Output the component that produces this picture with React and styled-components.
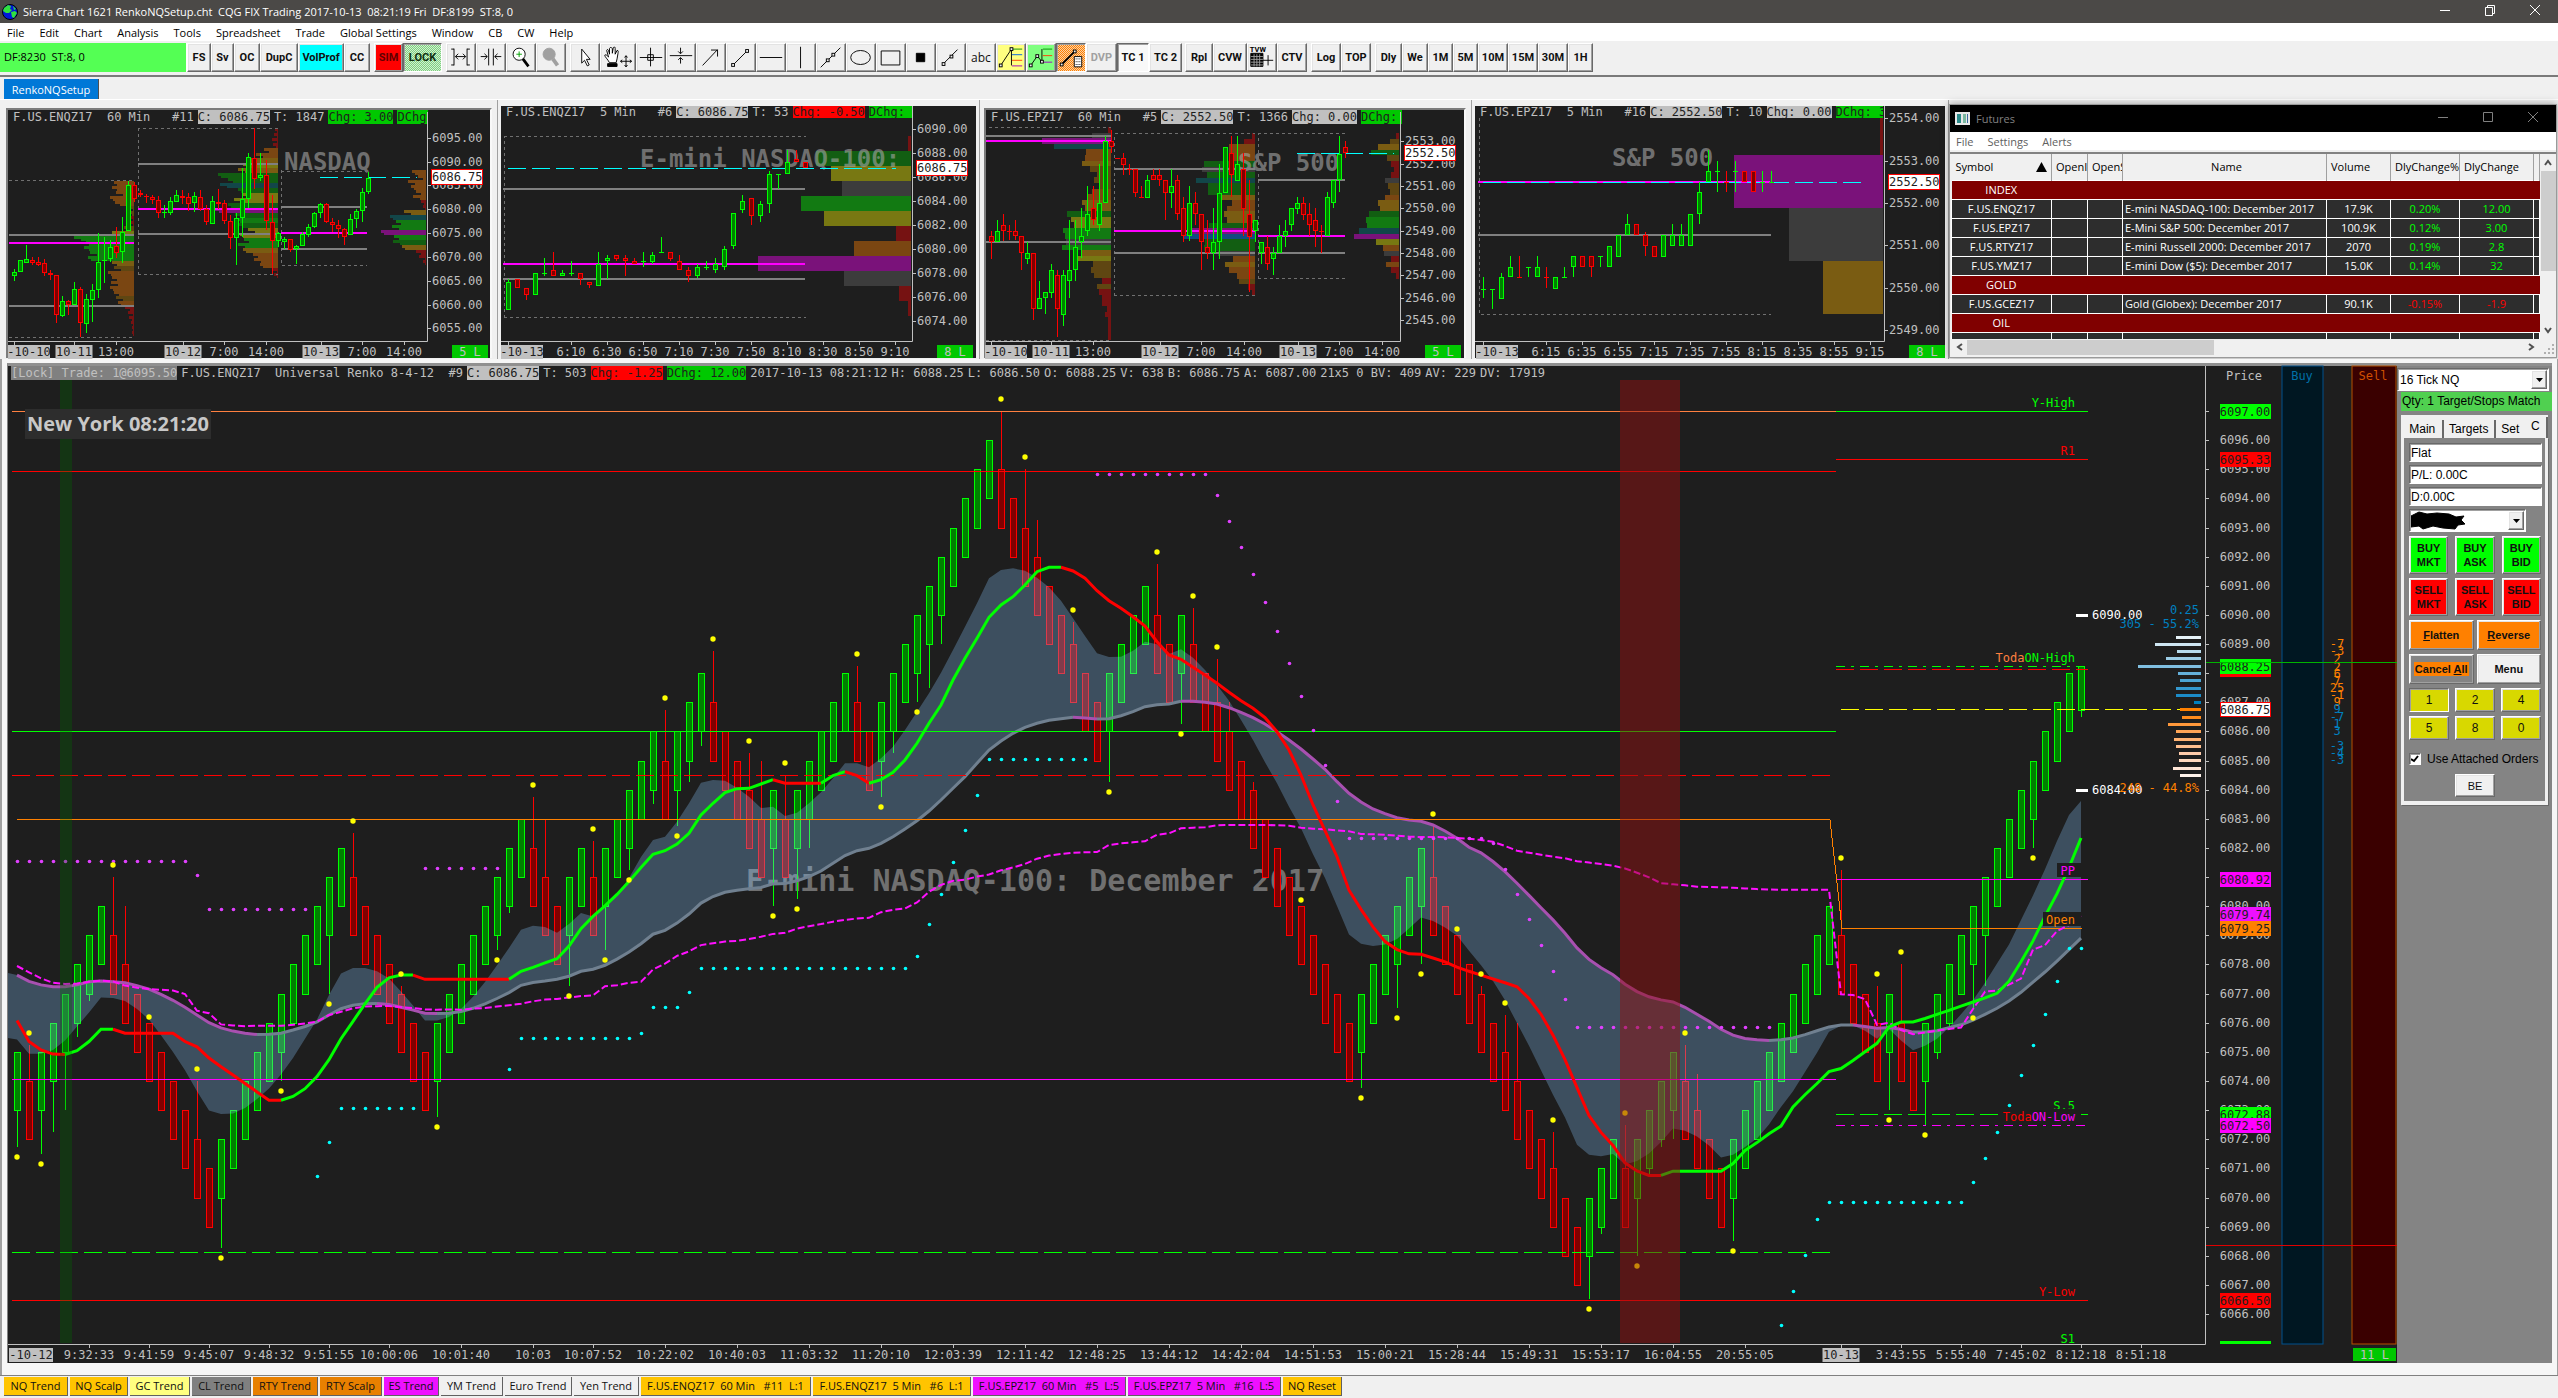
import React from "react"
import styled, { createGlobalStyle, css } from "styled-components"

const UI = `"Open Sans", "Noto Sans", sans-serif`
const MONO = `"DejaVu Sans Mono", "Liberation Mono", monospace`
const SANS = `"Liberation Sans", Arial, sans-serif`

const GlobalStyle = createGlobalStyle`
  * {
    box-sizing: border-box;
  }

  body {
    margin: 0;
    background: #f0f0f0;
    font-family: ${UI};
    font-size: 12px;
  }

  button, input, select {
    font: inherit;
    margin: 0;
    padding: 0;
    border-radius: 0;
  }
`

const raised = css`
  border: 1px solid;
  border-color: #ffffff #696969 #696969 #ffffff;
  box-shadow: inset -1px -1px 0 #a0a0a0, inset 1px 1px 0 #e3e3e3;
`

const sunken = css`
  border: 1px solid;
  border-color: #696969 #ffffff #ffffff #696969;
  box-shadow: inset 1px 1px 0 #a0a0a0;
`

/* ---------- frame ---------- */

const Shell = styled.div`
  display: flex;
  flex-direction: column;
  height: 100vh;
  overflow: hidden;
`

const TitleBar = styled.header`
  display: flex;
  align-items: center;
  flex: 0 0 23px;
  padding-left: 2px;
  background: #4b4947;
  color: #ffffff;
  white-space: pre;
`

const TitleText = styled.span`
  flex: 1;
  padding-left: 5px;
  font-size: 11px;
`

const WindowButtons = styled.div`
  display: flex;
`

const WindowButton = styled.button`
  width: 45px;
  height: 22px;
  border: 0;
  background: none;
  color: inherit;
`

const MenuBar = styled.nav`
  display: flex;
  flex: 0 0 18px;
  align-items: center;
  gap: 15px;
  padding-left: 7px;
  background: #ffffff;
  font-size: 11px;
`

const MenuLink = styled.a`
  color: ${props => props.$color || "#000000"};
  text-decoration: none;
`

const Toolbar = styled.div`
  display: flex;
  flex: 0 0 36px;
  padding-top: 2px;
  background: #f0f0f0;
  border-bottom: 2px solid #7a7a7a;
`

const FeedStatus = styled.div`
  width: 187px;
  height: 29px;
  padding-left: 4px;
  border-right: 1px solid #ffffff;
  background: #54ff54;
  font-size: 11px;
  line-height: 28px;
  white-space: pre;
`

const ToolButton = styled.button`
  display: flex;
  align-items: center;
  justify-content: center;
  width: ${props => props.$w || 30}px;
  height: 29px;
  margin-left: ${props => props.$gap || 0}px;
  background: ${props => props.$bg || "#f0f0f0"};
  color: ${props => props.$color || "#101010"};
  font: ${props => (props.$plain ? `12px ${UI}` : `bold 11px Roboto, ${SANS}`)};
  ${props => (props.$down ? sunken : raised)}
`

const TabStrip = styled.div`
  display: flex;
  align-items: flex-start;
  flex: 0 0 23px;
  padding: 2px 0 0 4px;
  border-bottom: 1px solid #ffffff;
`

const BookTab = styled.button`
  width: 95px;
  height: 20px;
  border: 0;
  border-right: 1px solid #505050;
  background: #0078d7;
  color: #ffffff;
  font-size: 11px;
`

const TopRow = styled.div`
  display: grid;
  flex: 0 0 259px;
  grid-template-columns: 496fr 482fr 492fr 477fr 609fr;
  grid-template-rows: minmax(0, 1fr);
  min-height: 0;
  padding-left: 2px;
`

const ChartCell = styled.section`
  display: flex;
  min-width: 0;
  min-height: 0;
  padding: ${props => (props.$framed ? "8px 5px 1px 4px" : "6px 3px 1px 3px")};
  border-right: 1px solid #a0a0a0;
`

const ChartFrame = styled.div`
  display: flex;
  flex: 1;
  flex-direction: column;
  min-width: 0;
  background: #1e1e1e;
  border: ${props => (props.$framed ? "2px solid #7c7c7c" : "0 solid #7c7c7c")};
  border-bottom: 0;
  ${props => props.$framed && "border-right-color: #f8f8f8;"}
`

const InfoLine = styled.div`
  display: flex;
  flex: 0 0 ${props => props.$h}px;
  margin-right: ${props => props.$right || 0}px;
  padding-left: ${props => props.$pad}px;
  gap: 4px;
  overflow: hidden;
  color: #c0c0c0;
  font: 12px/${props => props.$h}px ${MONO};
  white-space: pre;
`

const boxColors = {
  plain: ["transparent", "#c0c0c0"],
  gray: ["#808080", "#c0c0c0"],
  silver: ["#c0c0c0", "#1e1e1e"],
  red: ["#ff0000", "#1e1e1e"],
  green: ["#00c800", "#1e1e1e"],
}

const InfoBox = styled.span`
  background: ${props => boxColors[props.$kind][0]};
  color: ${props => boxColors[props.$kind][1]};
`

const Plot = styled.svg`
  display: block;
  flex: 1;
  width: 100%;
  min-height: 0;
  overflow: visible;
  font: 12px ${MONO};
`

/* ---------- small charts ---------- */

const profileColors = {
  r: "#761212",
  n: "#7a4612",
  d: "#5f4612",
  o: "#7a5c12",
  y: "#787812",
  g: "#125e12",
  G: "#127a12",
  t: "#124649",
  b: "#124a80",
  p: "#7a127a",
  x: "#3c3c3c",
}

const parseCandles = text =>
  text
    .trim()
    .split(/\s*,\s*/)
    .map(item => {
      const [side, ...nums] = item.split(" ")
      const [top, bottom, high = top, low = bottom] = nums.map(Number)
      return { up: side === "G", top, bottom, high, low }
    })

const Candle = ({ x, w, up, top, bottom, high, low }) => {
  const line = up ? "#00ff00" : "#ff0000"
  const half = (w - 1) / 2
  return (
    <g stroke={line} shapeRendering="crispEdges">
      {high < low && <path d={`M${x + 0.5} ${high}V${low}`} />}
      {bottom - top < 2 ? (
        <path d={`M${x - half} ${top + 0.5}h${w}`} />
      ) : (
        <rect
          x={x - half + 0.5}
          y={top + 0.5}
          width={w - 1}
          height={bottom - top - 1}
          fill={up ? "#008000" : "#800000"}
        />
      )}
    </g>
  )
}

const Profile = ({ right, top, step, rows, ragged }) => (
  <g shapeRendering="crispEdges">
    {rows.split(" ").map((row, i) => {
      const w = parseInt(row, 10)
      const fill = profileColors[row.slice(-1)]
      const y = top + i * step
      if (!ragged) {
        return <rect key={i} x={right - w} y={y} width={w} height={step} fill={fill} />
      }
      const cut = Math.min(w - 1, 3 + (i % 3) * 2)
      return (
        <g key={i} fill={fill}>
          <rect x={right - w} y={y} width={w} height={step / 2} />
          <rect x={right - w + cut} y={y + step / 2} width={w - cut} height={step / 2} />
        </g>
      )
    })}
  </g>
)

const lineStyles = {
  value: { stroke: "#808080", strokeWidth: 2 },
  poc: { stroke: "#ff00ff", strokeWidth: 2 },
  range: { stroke: "#707070", strokeDasharray: "3 3" },
  last: { stroke: "#00ffff", strokeDasharray: "18 6" },
}

const TimeLabel = ({ x, y, text, box }) => (
  <>
    {box && <rect x={x - box / 2} y={y - 7} width={box} height={14} fill="#c0c0c0" />}
    <text x={x} y={y + 4} textAnchor="middle" fill={box ? "#1e1e1e" : "#c0c0c0"}>
      {text}
    </text>
  </>
)

const Badge = ({ x, y, w, text }) => (
  <>
    <rect x={x} y={y} width={w} height={13} fill="#00c800" />
    <text x={x + w / 2} y={y + 11} textAnchor="middle" fill="#c0c0c0">
      {text}
    </text>
  </>
)

const MiniChart = ({ chart }) => {
  const { origin, axis, first, step } = chart
  return (
    <ChartCell $framed={chart.framed} aria-label={chart.name}>
      <ChartFrame $framed={chart.framed}>
        <InfoLine $h={chart.framed ? 14 : 12} $right={chart.tail} $pad={5}>
          {chart.info.map(([kind, text]) => (
            <InfoBox key={text} $kind={kind}>
              {text}
            </InfoBox>
          ))}
        </InfoLine>
        <Plot>
          <g transform={`translate(${-origin[0]} ${-origin[1]})`}>
            {chart.profiles.map((p, i) => (
              <Profile key={i} {...p} />
            ))}
            <text
              x={chart.mark[0]}
              y={chart.mark[1]}
              fill="rgba(167, 167, 167, 0.6)"
              fontSize="24"
              fontWeight="bold"
            >
              {chart.mark[2]}
            </text>
            {chart.lines.map(([kind, d], i) => (
              <path key={i} d={d} fill="none" shapeRendering="crispEdges" {...lineStyles[kind]} />
            ))}
            {chart.candles.map((c, i) => (
              <Candle key={i} x={first + i * step} w={5} {...c} />
            ))}
            <rect x={axis} y={origin[1]} width="60" height={342 - origin[1]} fill="#1e1e1e" />
            <path
              d={`M${axis + 0.5} ${origin[1] - 12}V341.5H${origin[0]}`}
              fill="none"
              stroke="#c0c0c0"
            />
            {chart.prices.map(([y, text]) => (
              <g key={text}>
                <path d={`M${axis} ${y + 0.5}h4`} stroke="#c0c0c0" />
                <text x={axis + 5} y={y + 4} fill="#c0c0c0">
                  {text}
                </text>
              </g>
            ))}
            <rect
              x={axis + 4.5}
              y={chart.last[0] - 7.5}
              width="51"
              height="15"
              fill="#ffffff"
              stroke="#ff0000"
            />
            <text x={axis + 5} y={chart.last[0] + 4} fill="#1e1e1e">
              {chart.last[1]}
            </text>
            {chart.times.map(([x, text, box, tick = x]) => (
              <g key={x}>
                <path d={`M${tick + 0.5} 342v3`} stroke="#c0c0c0" />
                <TimeLabel x={x} y={352} text={text} box={box} />
              </g>
            ))}
            <Badge x={chart.badge[0]} y={345} w={36} text={chart.badge[1]} />
          </g>
        </Plot>
      </ChartFrame>
    </ChartCell>
  )
}

const miniCharts = [
  {
    name: "NASDAQ 60 Min",
    framed: true,
    origin: [8, 124],
    tail: 62,
    axis: 427,
    first: 14,
    step: 6,
    info: [
      ["plain", "F.US.ENQZ17  60 Min   #11"],
      ["silver", "C: 6086.75"],
      ["plain", "T: 1847"],
      ["green", "Chg: 3.00"],
      ["green", "DChg: 12.00"],
    ],
    mark: [284, 170, "NASDAQ"],
    profiles: [
      {
        right: 134,
        top: 181,
        step: 5,
        ragged: true,
        rows:
          "20n 22n 18n 24n 19n 4d 5d 3r 3r 10d 22y 60G 48G 50G 44G 46G 22o 20d 26n 22n 23n 24n 20n 18d 16n 9r 6r 5r 3r 2r 2r",
      },
      {
        right: 278,
        top: 128,
        step: 5,
        ragged: true,
        rows:
          "3r 4r 6r 5r 14n 22n 32o 35y 40o 60g 50g 58t 40g 36y 44y 50g 64p 43g 41G 40g 30y 38y 34G 40G 35o 25n 24n 18n 6r 4r",
      },
      {
        right: 426,
        top: 170,
        step: 5,
        ragged: true,
        rows: "14n 8n 18n 15n 10n 13n 5r 3r 22o 36t 30G 34G 45p 32G 33g 24o 10r 7r 3r",
      },
    ],
    lines: [
      ["range", "M9 180.5H134M9 337.5H134M138.5 274.5V128.5H278M138 274.5H278M281.5 170V265.5H367M281 171.5H367"],
      ["value", "M9 235H134M9 306H134M138 164H278M138 234H278M281 207H367M281 249H367"],
      ["poc", "M9 243H134M138 209H278M281 233H367"],
      ["last", "M320 177.5H417"],
    ],
    candles: parseCandles(`
      G 272 276 269 281, G 260 272, G 259 263 245 263, R 260 263 257 265, R 262 265 257 266,
      R 263 273 259 276, R 273 275 270 280, R 275 315 275 323, G 301 316 296 317, R 301 305 300 315,
      G 289 305 282 305, R 289 323 287 337, G 299 324 294 333, G 290 300 284 322, G 262 290 233 298,
      G 260 261 237 283, G 247 259 240 262, R 246 253 227 258, G 232 252 217 263, G 185 231 181 231,
      R 185 199 182 202, R 193 195 190 197, R 196 197 194 203, R 197 200 195 204, R 200 213 196 218,
      G 212 213 205 218, G 201 213 197 215, G 195 202 190 202, R 196 198 190 204, R 197 204 193 211,
      G 196 203 192 212, R 197 209 190 211, R 209 222 205 225, G 201 224 196 224, R 202 204 189 209,
      R 203 221 200 224, R 221 238 215 249, G 218 238 213 265, G 199 218 168 237, G 157 199 153 208,
      R 158 179 128 189, G 175 178 153 181, R 175 221 160 230, R 222 241 195 274, G 233 241 232 247,
      G 239 242 237 249, R 239 250 239 252, G 246 249 245 264, G 234 246 232 246, G 227 235 224 237,
      G 213 227 212 228, G 204 213 203 218, R 204 222 203 223, R 222 225 218 232, R 225 229 220 238,
      R 229 237 228 245, G 219 235 214 235, G 211 219 209 228, G 192 211 188 222, G 178 192 172 194`),
    prices: [
      [138, "6095.00"],
      [162, "6090.00"],
      [185, "6085.00"],
      [209, "6080.00"],
      [233, "6075.00"],
      [257, "6070.00"],
      [281, "6065.00"],
      [305, "6060.00"],
      [328, "6055.00"],
    ],
    last: [177, "6086.75"],
    times: [
      [29, "-10-10", 42, 14],
      [74, "10-11", 37],
      [116, "13:00"],
      [183, "10-12", 37],
      [224, "7:00"],
      [266, "14:00"],
      [321, "10-13", 37],
      [362, "7:00"],
      [404, "14:00"],
    ],
    badge: [452, "5 L"],
  },
  {
    name: "E-mini NASDAQ-100 5 Min",
    origin: [501, 118],
    tail: 64,
    axis: 912,
    first: 508,
    step: 9,
    info: [
      ["plain", "F.US.ENQZ17  5 Min   #6"],
      ["silver", "C: 6086.75"],
      ["plain", "T: 53"],
      ["red", "Chg: -0.50"],
      ["green", "DChg: 12.00"],
    ],
    mark: [640, 167, "E-mini NASDAQ-100:"],
    profiles: [
      { right: 911, top: 136, step: 15, rows: "3r 95g 80y 69x 110G 87y 15r 57n 153p 67x 12r 3r" },
    ],
    lines: [
      ["range", "M504.5 317.5V136.5H806M504 317.5H806"],
      ["value", "M503 189H805M503 279H805"],
      ["poc", "M503 264H805"],
      ["last", "M508 168.5H896"],
    ],
    candles: parseCandles(`
      G 282 310 279 310, R 279 288, R 288 295 288 300, G 273 295, G 273 273 258 276,
      R 270 276 252 276, G 273 276 270 276, G 273 273 261 276, R 273 279 273 285, R 282 285 282 288,
      G 264 286 252 286, G 258 261 255 279, R 255 259 255 261, R 258 261 255 276, R 261 264 258 264,
      G 261 261 252 267, G 255 262 252 264, G 252 252 237 252, R 252 259 252 261, R 261 270 255 270,
      R 270 276 267 282, G 267 276 264 278, G 267 267 261 270, G 264 270 258 273, G 249 267 246 270,
      G 213 246 213 249, G 201 210 195 213, R 198 216 198 225, G 204 216 201 222, G 174 204 171 213,
      G 174 174 174 189, G 162 174 150 174, R 159 162 150 162, R 162 168`),
    prices: [
      [129, "6090.00"],
      [153, "6088.00"],
      [177, "6086.00"],
      [201, "6084.00"],
      [225, "6082.00"],
      [249, "6080.00"],
      [273, "6078.00"],
      [297, "6076.00"],
      [321, "6074.00"],
    ],
    last: [168, "6086.75"],
    times: [
      [522, "-10-13", 42, 508],
      [571, "6:10"],
      [607, "6:30"],
      [643, "6:50"],
      [679, "7:10"],
      [715, "7:30"],
      [751, "7:50"],
      [787, "8:10"],
      [823, "8:30"],
      [859, "8:50"],
      [895, "9:10"],
    ],
    badge: [937, "8 L"],
  },
  {
    name: "S&P 500 60 Min",
    framed: true,
    origin: [986, 124],
    tail: 62,
    axis: 1400,
    first: 991,
    step: 6,
    info: [
      ["plain", "F.US.EPZ17  60 Min   #5"],
      ["silver", "C: 2552.50"],
      ["plain", "T: 1366"],
      ["silver", "Chg: 0.00"],
      ["green", "DChg: 3.00"],
    ],
    mark: [1238, 171, "S&P 500"],
    profiles: [
      {
        right: 1111,
        top: 127,
        step: 5.6,
        rows:
          "3r 19x 69p 57t 25n 26n 29o 21d 14d 17d 11d 19n 23n 29o 26o 44g 40y 37y 48G 46G 45x 49G 30o 33y 18d 20d 17d 9r 14d 12r 9r 9r 4r 6r 3r 3r 3r 3r",
      },
      {
        right: 1255,
        top: 133,
        step: 5.6,
        rows:
          "3r 11r 26n 26n 26n 51g 53x 48g 59t 47g 47g 33o 23n 28n 31o 28o 46g 68p 71b 50g 51g 37x 22n 30o 26n 18n 16d 7r 3r",
      },
      {
        right: 1399,
        top: 133,
        step: 5.6,
        rows:
          "3r 9d 21o 28g 12d 8r 5r 8r 14x 11d 9d 14n 21o 19o 30g 33G 32G 40t 45p 23y 16n 15x 8r 13n 8r 3r",
      },
    ],
    lines: [
      ["range", "M989 127.5H1111M986 340.5H1111M1114.5 295.5V133.5H1255M1114 295.5H1255M1258.5 278.5V133.5H1346M1258 278.5H1346"],
      ["value", "M986 136H1111M986 242H1111M1114 169H1255M1114 253H1255M1258 180H1345M1258 253H1345"],
      ["poc", "M986 141H1111M1114 231H1255M1258 236H1345"],
      ["last", "M1297 153.5H1394"],
    ],
    candles: parseCandles(`
      R 236 242 231 259, G 231 242 220 242, R 225 231 214 241, R 231 231 225 240, R 231 236 220 240,
      R 236 253 236 270, G 253 259 242 264, R 253 309 253 320, G 298 309 281 309, G 292 298 292 314,
      G 270 293 264 298, R 275 309 270 337, G 275 315 270 326, G 270 281 220 298, G 247 270 220 281,
      G 236 242 208 258, G 214 231 186 236, R 208 220 186 225, G 203 225 164 231, G 141 203 136 203,
      R 141 147 130 153, R 158 158, R 158 165 153 175, R 169 169 164 175, R 169 193 169 197,
      R 197 197 186 197, G 180 198 175 198, R 175 180 169 180, R 175 180 169 186, R 180 193 180 220,
      G 186 193 169 208, R 180 214 175 220, R 208 236 197 242, G 203 236 186 241, R 203 214 192 225,
      R 214 242 214 270, R 247 253 220 259, G 242 253 208 270, G 193 242 164 259, G 147 193,
      R 153 175 136 197, G 164 181 136 181, R 169 209 153 236, R 214 237 180 292, G 220 231 220 242,
      G 242 253 242 264, R 247 264 236 270, G 253 259 247 275, G 236 253 225 253, G 231 236 220 247,
      G 208 225 208 231, G 203 209 197 214, R 203 215 197 220, R 214 225 203 236, R 220 231 208 247,
      R 231 231 225 253, G 197 236 192 236, G 180 203 180 208, G 154 180 136 192, R 147 153 141 158`),
    prices: [
      [141, "2553.00"],
      [164, "2552.00"],
      [186, "2551.00"],
      [208, "2550.00"],
      [231, "2549.00"],
      [253, "2548.00"],
      [275, "2547.00"],
      [298, "2546.00"],
      [320, "2545.00"],
    ],
    last: [153, "2552.50"],
    times: [
      [1006, "-10-10", 42, 991],
      [1051, "10-11", 37],
      [1093, "13:00"],
      [1160, "10-12", 37],
      [1201, "7:00"],
      [1244, "14:00"],
      [1298, "10-13", 37],
      [1339, "7:00"],
      [1382, "14:00"],
    ],
    badge: [1425, "5 L"],
  },
  {
    name: "S&P 500 5 Min",
    origin: [1475, 118],
    tail: 62,
    axis: 1884,
    first: 1483,
    step: 9,
    info: [
      ["plain", "F.US.EPZ17  5 Min   #16"],
      ["silver", "C: 2552.50"],
      ["plain", "T: 10"],
      ["silver", "Chg: 0.00"],
      ["green", "DChg: 3.00"],
    ],
    mark: [1612, 166, "S&P 500"],
    profiles: [
      { right: 1883, top: 118, step: 37, rows: "3r" },
      { right: 1883, top: 155, step: 53, rows: "149p 94x 60o" },
    ],
    lines: [
      ["range", "M1479.5 118V314.5H1771"],
      ["value", "M1478 235H1771"],
      ["poc", "M1478 182H1770"],
      ["last", "M1483 182.5H1861"],
    ],
    candles: parseCandles(`
      G 289 289 277 298, G 289 289 289 309, G 277 299 273 299, G 267 277 256 277, R 277 277 256 277,
      G 267 267 267 277, G 267 277 256 277, R 277 277 267 288, G 277 289, G 277 277 267 277,
      G 256 267 256 277, R 256 267, R 256 267 256 277, G 256 256 256 267, G 246 267, G 235 257,
      G 224 235 214 235, R 224 235, R 235 246 232 256, R 246 257, G 235 257, G 235 246 224 246,
      G 235 246 224 246, G 214 246, G 192 214 182 224, G 171 182 150 182, G 171 171 161 192,
      R 182 182 171 192, G 171 171 161 192, R 171 182, R 171 192, G 182 182 171 192, G 182 182 171 183`),
    prices: [
      [118, "2554.00"],
      [161, "2553.00"],
      [203, "2552.00"],
      [245, "2551.00"],
      [288, "2550.00"],
      [330, "2549.00"],
    ],
    last: [182, "2552.50"],
    times: [
      [1497, "-10-13", 42, 1483],
      [1546, "6:15"],
      [1582, "6:35"],
      [1618, "6:55"],
      [1654, "7:15"],
      [1690, "7:35"],
      [1726, "7:55"],
      [1762, "8:15"],
      [1798, "8:35"],
      [1834, "8:55"],
      [1870, "9:15"],
    ],
    badge: [1909, "8 L"],
  },
]

/* ---------- futures quote window ---------- */

const QuoteWindow = styled.section`
  display: flex;
  flex-direction: column;
  min-width: 0;
  min-height: 0;
  margin: 4px 1px 1px 0;
  border: 1px solid #9a9a9a;
  background: #f0f0f0;
  box-shadow: 0 0 8px rgba(0, 0, 0, 0.35);
`

const QuoteTitle = styled.div`
  display: flex;
  align-items: center;
  flex: 0 0 27px;
  gap: 6px;
  padding-left: 5px;
  background: #000000;
  color: #808080;
  font-size: 11px;
`

const QuoteName = styled.span`
  flex: 1;
`

const QuoteMenu = styled.nav`
  display: flex;
  align-items: center;
  flex: 0 0 18px;
  gap: 14px;
  padding-left: 6px;
  background: #ffffff;
  font-size: 11px;
`

const QuoteBody = styled.div`
  display: grid;
  flex: 1;
  grid-template-columns: minmax(0, 1fr) 16px;
  grid-template-rows: minmax(0, 1fr) 16px;
  min-height: 0;
  margin-top: 2px;
  padding: 0 0 2px 1px;
  border-top: 2px solid #828282;
`

const TableClip = styled.div`
  overflow: hidden;
`

const QuoteTable = styled.table`
  width: 100%;
  table-layout: fixed;
  border-collapse: collapse;
  font-size: 11px;
  white-space: nowrap;

  th {
    height: 26px;
    overflow: hidden;
    padding: 0 0 0 4px;
    border-right: 1px solid #a0a0a0;
    background: #f0f0f0;
    font-weight: normal;
    text-align: left;
  }

  td {
    height: 19px;
    overflow: hidden;
    padding: 0 2px;
    border: 1px solid #ffffff;
    background: #2d2d2d;
    color: #ffffff;
    line-height: 17px;
    text-align: center;
  }

  th:nth-child(4) {
    text-align: center;
  }

  td:nth-child(4) {
    text-align: left;
  }
`

const GroupRow = styled.tr`
  && td {
    background: #800000;
    border-left: 0;
    border-right-color: #800000;
  }
`

const ChangeCell = styled.td`
  && {
    color: ${props => (props.$down ? "#ff0000" : "#00ff00")};
  }
`

const SymbolHead = styled.span`
  display: flex;
  align-items: center;
  justify-content: space-between;
  padding-right: 4px;
`

const ScrollTrack = styled.div`
  display: flex;
  flex-direction: ${props => (props.$vertical ? "column" : "row")};
  align-items: center;
  justify-content: space-between;
  padding: ${props => (props.$vertical ? "5px 0" : "0 5px")};
  background: #f0f0f0;
`

const ScrollThumb = styled.div`
  background: #cdcdcd;
  ${props =>
    props.$vertical
      ? "width: 15px; height: 100px; margin: 4px 0 auto;"
      : "width: 247px; height: 15px; margin: 0 auto 0 3px;"}
`

const Chevron = ({ d }) => (
  <svg width="8" height="8" viewBox="0 0 8 8" fill="none" stroke="#505050" strokeWidth="2">
    <path d={d} />
  </svg>
)

const quotes = [
  ["INDEX"],
  ["F.US.ENQZ17", "E-mini NASDAQ-100: December 2017", "17.9K", "0.20%", "12.00"],
  ["F.US.EPZ17", "E-Mini S&P 500: December 2017", "100.9K", "0.12%", "3.00"],
  ["F.US.RTYZ17", "E-mini Russell 2000: December 2017", "2070", "0.19%", "2.8"],
  ["F.US.YMZ17", "E-mini Dow ($5): December 2017", "15.0K", "0.14%", "32"],
  ["GOLD"],
  ["F.US.GCEZ17", "Gold (Globex): December 2017", "90.1K", "-0.15%", "-1.9"],
  ["OIL"],
  ["", "", "", "", ""],
]

const Futures = () => (
  <QuoteWindow aria-label="Futures">
    <QuoteTitle>
      <svg width="15" height="13" viewBox="0 0 15 13">
        <rect width="15" height="13" fill="#e8e8e8" />
        <path d="M2 2h4v9H2z" fill="#2a8a8a" />
        <path d="M8 2h3v9H8z" fill="#7ab8a0" />
        <path d="M12 2h1v9h-1z" fill="#3a6aa0" />
      </svg>
      <QuoteName>Futures</QuoteName>
      <WindowButtons>
        <WinControls restore={false} />
      </WindowButtons>
    </QuoteTitle>
    <QuoteMenu>
      <MenuLink href="#file" $color="#606060">File</MenuLink>
      <MenuLink href="#settings" $color="#606060">Settings</MenuLink>
      <MenuLink href="#alerts" $color="#606060">Alerts</MenuLink>
    </QuoteMenu>
    <QuoteBody>
      <TableClip>
        <QuoteTable>
          <colgroup>
            <col width="100" />
            <col width="36" />
            <col width="35" />
            <col width="204" />
            <col width="64" />
            <col width="69" />
            <col width="74" />
            <col />
          </colgroup>
          <thead>
            <tr>
              <th>
                <SymbolHead>
                  Symbol
                  <svg width="11" height="12" viewBox="0 0 11 12">
                    <path d="M5.500 1L11 11H0z" />
                  </svg>
                </SymbolHead>
              </th>
              <th>OpenI</th>
              <th>OpenS</th>
              <th>Name</th>
              <th>Volume</th>
              <th>DlyChange%</th>
              <th>DlyChange</th>
              <th />
            </tr>
          </thead>
          <tbody>
            {quotes.map(([symbol, name, volume, pct, change], i) =>
              name === undefined ? (
                <GroupRow key={i}>
                  <td>{symbol}</td>
                  <td colSpan="7" />
                </GroupRow>
              ) : (
                <tr key={i}>
                  <td>{symbol}</td>
                  <td />
                  <td />
                  <td>{name}</td>
                  <td>{volume}</td>
                  <ChangeCell $down={pct[0] === "-"}>{pct}</ChangeCell>
                  <ChangeCell $down={change[0] === "-"}>{change}</ChangeCell>
                  <td />
                </tr>
              )
            )}
          </tbody>
        </QuoteTable>
      </TableClip>
      <ScrollTrack $vertical>
        <Chevron d="M1 6l3-4 3 4" />
        <ScrollThumb $vertical />
        <Chevron d="M1 2l3 4 3-4" />
      </ScrollTrack>
      <ScrollTrack>
        <Chevron d="M6 1L2 4l4 3" />
        <ScrollThumb />
        <Chevron d="M2 1l4 3-4 3" />
      </ScrollTrack>
      <svg width="16" height="16" viewBox="0 0 16 16" fill="#b0b0b0">
        <path d="M12 5h2v2h-2zM12 9h2v2h-2zM8 9h2v2H8zM12 13h2v2h-2zM8 13h2v2H8zM4 13h2v2H4z" />
      </svg>
    </QuoteBody>
  </QuoteWindow>
)

/* ---------- main renko chart ---------- */

const MainArea = styled.main`
  display: flex;
  flex: 1;
  min-height: 0;
  padding: 4px 5px 12px 5px;
  border: 1px solid #a0a0a0;
  border-width: 0 1px 0 2px;
  background: #f6f6f6;
`

const MainFrame = styled.div`
  display: flex;
  flex: 1;
  min-width: 0;
  border: 1px solid #808080;
  border-top: 3px solid #909090;
  border-right: 0;
  border-bottom: 0;
  background: #1e1e1e;
`

const MainChartBox = styled.section`
  position: relative;
  display: flex;
  flex: 1;
  flex-direction: column;
  min-width: 0;
`

const Clock = styled.div`
  position: absolute;
  left: 17px;
  top: 43px;
  padding: 0 2px;
  background: #2d2d2d;
  color: #c8c8c8;
  font: bold 20px/30px ${UI};
`

const barX = i => 17 + i * 12
const priceY = p => 411 + (6097 - p) * 29.13
const upper = values => values.map(v => 360 + v / 3)
const lower = values => values.map(v => 850 + v / 2.861)

const runs =
  "G1 R1 G6 R9 G11 R7 G8 R3 G2 R1 G5 R1 G3 R5 G1 R1 G5 R2 G10 R9 G4 R2 G1 R14 G6 R13 G3 R1 G4 R4 G9 R4 G1 R2 G14"

const highs = {
  1: 6075.25, 8: 6081, 9: 6080, 15: 6074, 28: 6082.5, 32: 6077.25, 43: 6083.75, 44: 6083,
  48: 6082.25, 54: 6086.75, 58: 6088.75, 61: 6085.25, 62: 6085, 64: 6084.5, 70: 6088.25,
  82: 6097, 84: 6095, 85: 6093.25, 88: 6089.75, 95: 6091.75, 98: 6090.25, 100: 6088.5,
  101: 6087, 103: 6084.25, 118: 6082.75, 122: 6077.25, 124: 6076.25, 125: 6076, 128: 6072.25,
  134: 6072.5, 139: 6075.25, 140: 6074.25, 152: 6081.25, 155: 6077.25, 157: 6078,
}

const lows = {
  0: 6071.75, 2: 6071.5, 3: 6072.25, 4: 6073, 5: 6075.5, 6: 6076.75, 17: 6068.25, 22: 6074,
  26: 6077, 35: 6072.75, 40: 6078.5, 41: 6079.75, 46: 6077.25, 49: 6078.5, 51: 6081.25,
  53: 6083.5, 55: 6082.75, 56: 6084.25, 57: 6085.5, 63: 6080, 65: 6080.25, 66: 6082,
  72: 6083.75, 73: 6085.25, 75: 6087, 76: 6087.5, 77: 6089, 91: 6084.25, 97: 6086.25,
  112: 6073.75, 115: 6076.5, 117: 6078, 131: 6066.5, 132: 6068.75, 135: 6068, 136: 6070.75,
  137: 6071.75, 138: 6072, 143: 6068.5, 156: 6073, 159: 6072.5, 160: 6074.75, 161: 6075.75,
  163: 6076.5, 164: 6077.25, 168: 6082, 172: 6086.5,
}

const swingHighs = [1, 8, 11, 15, 28, 32, 43, 48, 54, 58, 61, 64, 70, 82, 84, 88, 95, 98, 100, 107, 118, 120, 122, 124, 128, 134, 139, 152, 155, 157]
const swingLows = [0, 2, 17, 22, 26, 35, 40, 46, 49, 51, 55, 63, 65, 72, 75, 91, 97, 112, 115, 117, 131, 135, 143, 156, 159, 163, 168]

const bars = []
runs.split(" ").forEach(run => {
  for (let n = 0; n < Number(run.slice(1)); n += 1) {
    const up = run[0] === "G"
    const prev = bars.length ? bars[bars.length - 1].price : 6074
    bars.push({ up, price: prev + (up ? 1 : -1) })
  }
})

const renko = bars.map(({ up, price }, i) => {
  const lastBar = i === bars.length - 1
  const top = lastBar ? 6088.25 : price
  const bottom = lastBar ? 6086.75 : price - 2
  const high = Math.max(highs[i] || top, top)
  const low = Math.min(lows[i] || bottom, bottom)
  return {
    up,
    top: Math.round(priceY(top)),
    bottom: Math.round(priceY(bottom)) + 1,
    high: Math.round(priceY(high)),
    low: Math.round(priceY(low)),
  }
})

const slow = [
  ...lower([
    358, 376, 386, 391, 391, 386, 377, 375, 377, 380, 388, 398, 413, 430, 450, 472, 494, 509, 518,
    524, 528, 527, 524, 515, 505, 492, 472, 454, 444, 440, 439, 442, 450, 458, 467, 468, 467, 462,
    453, 440, 425, 408, 387, 379, 375, 370, 361, 347, 341, 330, 312, 292, 268, 241, 230, 209, 183,
    152, 133, 121, 115, 111, 107, 97, 96, 88, 76, 60, 38, 16,
  ]),
  ...upper([
    1472, 1465, 1450, 1430, 1407, 1382, 1353, 1320, 1285, 1250, 1210, 1170, 1143, 1120, 1102, 1090,
    1081, 1076, 1072, 1074, 1077, 1076, 1067, 1055, 1040, 1034, 1032, 1024, 1024, 1027, 1032, 1043,
    1057, 1073, 1092, 1115, 1140, 1167, 1197, 1228, 1265, 1300, 1326, 1347, 1361, 1373, 1380, 1384,
    1395, 1413, 1435, 1462,
  ]),
  ...lower([
    8, 33, 62, 95, 130, 165, 200, 238, 280, 313, 337, 357, 384, 405, 420, 429, 435, 450, 470, 490,
    513, 530, 539, 543, 545, 543, 538, 528, 517, 506, 501, 501, 505, 510, 508, 513, 521, 521, 517,
    508, 500, 487, 470, 453, 432, 407, 378, 349, 318, 285, 252,
  ]),
]

const edge = [
  ...lower([
    542, 583, 583, 572, 545, 505, 465, 422, 423, 432, 455, 485, 530, 578, 630, 690, 745, 755, 754,
    738, 712, 682, 642, 595, 540, 485, 415, 353, 338, 338, 347, 368, 405, 445, 488, 488, 478, 455,
    420, 378, 330, 280, 228, 217, 220, 237, 212, 180, 190, 165, 130, 80, 20,
  ]),
  ...upper([
    1440, 1430, 1385, 1330, 1268, 1260, 1262, 1283, 1310, 1344, 1340, 1368, 1358, 1330, 1297, 1255,
    1210, 1210, 1222, 1195, 1160, 1110, 1055, 1000, 938, 870, 800, 730, 655, 630, 625, 632, 653,
    682, 722, 775, 828, 880, 891, 890, 872, 845, 853, 882, 868, 893, 930, 975, 1022, 1080, 1140,
    1207, 1270, 1340, 1405, 1483,
  ]),
  ...lower([
    80, 160, 242, 268, 275, 270, 255, 225, 193, 203, 222, 245, 288, 330, 375, 430, 495, 560, 630,
    700, 765, 843, 872, 876, 870, 900, 890, 868, 835, 797, 803, 820, 845, 880, 872, 850, 825, 785,
    735, 690, 635, 580, 520, 503, 502, 517, 540, 512, 545, 573, 560, 540, 508, 470, 430, 380, 325,
    270, 200, 130, 55,
  ]),
  841, 815, 801,
]

const fast = [
  ...lower([
    488, 548, 572, 584, 585, 574, 548, 513, 513, 524, 524, 524, 524, 524, 548, 563, 595, 620, 644,
    668, 692, 716, 716, 705, 683, 648, 600, 540, 490, 440, 393, 366, 358, 358, 370, 370, 370, 370,
    370, 370, 370, 370, 347, 336, 323, 311, 275, 225, 190, 160, 127, 90, 50,
  ]),
  ...upper([
    1483, 1472, 1452, 1420, 1365, 1330, 1298, 1286, 1285, 1272, 1259, 1270, 1270, 1270, 1270, 1247,
    1235, 1247, 1270, 1259, 1237, 1200, 1150, 1090, 1035, 960, 895, 835, 772, 735, 710, 675, 635,
    622, 622, 633, 655, 692, 722, 745, 770, 798, 845, 885, 898, 922, 945, 970, 997, 1022, 1045,
    1073, 1115, 1170, 1245, 1335, 1412, 1490,
  ]),
  ...lower([
    115, 170, 220, 262, 285, 297, 298, 309, 320, 335, 347, 358, 369, 380, 391, 425, 470, 530, 600,
    680, 760, 808, 845, 895, 918, 931, 931, 919, 919, 919, 919, 919, 897, 860, 837, 812, 790, 735,
    700, 668, 634, 625, 602, 577, 553, 506, 492, 492, 482, 470, 459, 447, 435, 423, 410, 376, 320,
    260, 190, 125, 50,
  ]),
  838,
]

const vwap = [
  ...lower([
    332, 350, 367, 380, 383, 382, 377, 374, 376, 388, 394, 398, 400, 402, 412, 460, 467, 499, 502,
    504, 503, 503, 503, 500, 496, 491, 472, 463, 453, 448, 447, 446, 450, 452, 456, 457, 456, 457,
    454, 452, 448, 444, 440, 433, 428, 426, 422, 418, 416, 390, 387, 380, 377, 342, 325, 303, 290,
    272, 267, 262, 260, 255, 248, 240, 237, 225, 218, 212, 205, 200, 196, 194, 178, 171, 167, 150,
    120, 100, 88, 85, 76, 70, 58, 50, 40, 25, 16,
  ]),
  ...upper([
    1482, 1478, 1477, 1476, 1455, 1450, 1447, 1444, 1424, 1420, 1405, 1403, 1402, 1396, 1395, 1395,
    1395, 1395, 1396, 1397, 1403, 1406, 1408, 1411, 1414, 1422, 1423, 1424, 1427, 1430, 1431, 1431,
    1432, 1434, 1436, 1440, 1445, 1458, 1472, 1478, 1484, 1490, 1495,
  ]),
  ...lower([
    32, 36, 40, 45, 53, 65, 78, 95, 98, 101, 105, 106, 107, 108, 110, 112, 113, 114, 114, 114, 114,
    114, 413, 415, 427, 500, 494, 515, 527, 522, 517, 512, 508, 455, 405, 402, 385, 368, 285, 272,
    232, 215, 187,
  ]),
]

const dotRun = (from, to, y) =>
  Array.from({ length: to - from + 1 }, (_, n) => [from + n, y])
const dotTrail = (from, ys) => ys.map((y, n) => [from + n, y])

const upperDots = [
  ...dotRun(0, 14, 861),
  [15, 875],
  ...dotRun(16, 24, 909),
  ...dotRun(34, 40, 868),
  ...dotRun(90, 99, 474),
  ...dotTrail(100, [495, 521, 547, 574, 602, 631, 663, 696, 730, 765, 801]),
  ...dotRun(111, 122, 838),
  ...dotTrail(123, [843, 869, 894, 919, 945, 971, 999]),
  ...dotRun(130, 146, 1027),
]

const lowerDots = [
  ...dotTrail(25, [1176, 1142]),
  ...dotRun(27, 33, 1108),
  [41, 1069],
  ...dotRun(42, 51, 1038),
  [52, 1033],
  ...dotRun(53, 55, 1007),
  [56, 992],
  ...dotRun(57, 74, 968),
  ...dotTrail(75, [956, 924, 894, 862, 830, 795]),
  ...dotRun(81, 89, 759),
  ...dotTrail(147, [1325, 1291, 1255, 1219]),
  ...dotRun(151, 162, 1202),
  ...dotTrail(163, [1182, 1158, 1132, 1105, 1075, 1045, 1014, 981, 948, 948]),
]

const pathOf = (ys, from = 0, to = ys.length - 1) =>
  "M" +
  ys
    .slice(from, to + 1)
    .map((y, n) => `${barX(from + n)} ${y.toFixed(1)}`)
    .join("L")

const ribbon = `M8 973L${pathOf(slow).slice(1)}L${edge
  .map((y, i) => `${barX(i)} ${y.toFixed(1)}`)
  .reverse()
  .join("L")}L8 1038Z`

const slowParts = [
  [0, 20, 1], [20, 30, 0], [30, 35, 1], [35, 88, 0], [88, 90, 1], [90, 97, 0], [97, 146, 1],
  [146, 153, 0], [153, 158, 1], [158, 172, 0],
]

const fastParts = [
  [0, 4, 0], [4, 8, 1], [8, 22, 0], [22, 33, 1], [33, 41, 0], [41, 63, 1], [63, 67, 0],
  [67, 69, 1], [69, 71, 0], [71, 87, 1], [87, 137, 0], [137, 172, 1],
]

const levels = [
  ["#ff8040", "M12 411.5H1836"],
  ["#00ff00", "M1836 411.5H2088M12 731.5H1836"],
  ["#ff0000", "M12 471.5H1836M1836 459.5H2088M12 1300.5H2088"],
  ["#ff0000", "M12 775.5H1830M1836 669.5H2088", "18 6"],
  ["#ff8000", "M17 819.5H1830L1842 928.5H2082"],
  ["#ff00ff", "M12 1079.5H1836M1837 879.5H2088"],
  ["#00ff00", "M12 1252.5H1831M1836 1114.5H2088", "18 6"],
  ["#00ff00", "M1836 666.5H2085", "9 6 3 6"],
  ["#ff00ff", "M1836 1125.5H2088", "9 6 3 6"],
  ["#ffff00", "M1841 709.5H2201", "18 6"],
]

const Tag = ({ y, parts, backed }) => {
  const text = parts.map(p => p[1]).join("")
  const w = text.length * 7 + 6
  return (
    <>
      {backed && <rect x={2077 - w} y={y - 8} width={w + 4} height={14} fill="#1e1e1e" />}
      <text x="2075" y={y + 4} textAnchor="end">
        {parts.map(([fill, part]) => (
          <tspan key={part} fill={fill}>
            {part}
          </tspan>
        ))}
      </text>
    </>
  )
}

const tags = [
  [403, [["#00ff00", "Y-High"]]],
  [451, [["#ff0000", "R1"]]],
  [658, [["#ff8040", "Toda"], ["#00ff00", "ON-High"]]],
  [871, [["#ff00ff", "PP"]], true],
  [920, [["#ff8000", "Open"]], true],
  [1106, [["#00ff00", "S.5"]]],
  [1117, [["#ff0000", "Toda"], ["#ff00ff", "ON-Low"]], true],
  [1292, [["#ff0000", "Y-Low"]]],
  [1339, [["#00ff00", "S1"]]],
]

const depth = [
  [637, 25, "#e6f2f8"], [644, 46, "#cfe6f2"], [651, 24, "#b8dcee"], [658, 35, "#9ccde6"],
  [666, 63, "#80bfe0"], [673, 23, "#64b0da"], [680, 21, "#4ca4d4"], [688, 25, "#3498ce"],
  [695, 25, "#1c8cc8"], [702, 7, "#0080c0"], [709, 21, "#ff8000"], [717, 19, "#ff8c1c"],
  [724, 33, "#ff983a"], [731, 25, "#ffa556"], [739, 27, "#ffb272"], [746, 25, "#ffbf8e"],
  [753, 22, "#ffccaa"], [760, 22, "#ffd9be"], [768, 28, "#ffe6d6"], [775, 21, "#fff2ea"],
]

const priceBoxes = [
  [411, "6097.00", "#00ff00"],
  [459, "6095.33", "#ff0000"],
  [669, "6088.00", "#ff0000"],
  [666, "6088.25", "#00ff00"],
  [709, "6086.75", "#ffffff", "#ff0000"],
  [879, "6080.92", "#ff00ff"],
  [914, "6079.74", "#ee10ff"],
  [928, "6079.25", "#ff8000"],
  [1114, "6072.88", "#00ff00"],
  [1125, "6072.50", "#ff00ff"],
  [1300, "6066.50", "#ff0000"],
]

const ladder = [
  [644, "-7", 1], [651, "-3", 1], [659, "2", 1], [667, "2", 1], [674, "6", 1], [681, "7", 1],
  [688, "25", 1], [695, "-1", 1], [702, "9", 1], [709, "9"], [717, "-7"], [724, "1"], [731, "3"],
  [746, "-3"], [753, "-4"], [760, "-3"],
]

const mainTimes = [
  [6, "9:32:33"], [11, "9:41:59"], [16, "9:45:07"], [21, "9:48:32"], [26, "9:51:55"],
  [31, "10:00:06"], [37, "10:01:40"], [43, "10:03"], [48, "10:07:52"], [54, "10:22:02"],
  [60, "10:40:03"], [66, "11:03:32"], [72, "11:20:10"], [78, "12:03:39"], [84, "12:11:42"],
  [90, "12:48:25"], [96, "13:44:12"], [102, "14:42:04"], [108, "14:51:53"], [114, "15:00:21"],
  [120, "15:28:44"], [126, "15:49:31"], [132, "15:53:17"], [138, "16:04:55"], [144, "20:55:05"],
  [152, "10-13", 37], [157, "3:43:55"], [162, "5:55:40"], [167, "7:45:02"], [172, "8:12:18"],
  [177, "8:51:18"],
]

const mainInfo = [
  ["gray", "[Lock] Trade: 1@6095.50"],
  ["plain", "F.US.ENQZ17  Universal Renko 8-4-12  #9"],
  ["silver", "C: 6086.75"],
  ["plain", "T: 503"],
  ["red", "Chg: -1.25"],
  ["green", "DChg: 12.00"],
  ["plain", "2017-10-13 08:21:12"],
  ["plain", "H: 6088.25"],
  ["plain", "L: 6086.50"],
  ["plain", "O: 6088.25"],
  ["plain", "V: 638"],
  ["plain", "B: 6086.75"],
  ["plain", "A: 6087.00"],
  ["plain", "21x5 0 BV: 409"],
  ["plain", "AV: 229"],
  ["plain", "DV: 17919"],
]

const MainChart = () => (
  <MainChartBox aria-label="Universal Renko">
    <InfoLine $h={14} $pad={3}>
      {mainInfo.map(([kind, text]) => (
        <InfoBox key={text} $kind={kind}>
          {text}
        </InfoBox>
      ))}
    </InfoLine>
    <Plot>
      <g transform="translate(-8 -380)">
        <text x="746" y="891" fill="#707070" fontSize="30" fontWeight="bold">
          E-mini NASDAQ-100: December 2017
        </text>
        {renko.map((bar, i) => (
          <Candle key={i} x={barX(i)} w={7} {...bar} />
        ))}
        <path d={ribbon} fill="rgba(135, 197, 247, 0.3)" />
        {slowParts.map(([from, to, falling]) => (
          <path
            key={from}
            d={pathOf(slow, from, to)}
            fill="none"
            stroke={falling ? "#a850b0" : "#708090"}
            strokeWidth="3"
          />
        ))}
        <g fill="none" shapeRendering="crispEdges">
          {levels.map(([stroke, d, dash]) => (
            <path key={d} d={d} stroke={stroke} strokeDasharray={dash} />
          ))}
        </g>
        <path d={pathOf(vwap)} fill="none" stroke="#ff10ff" strokeWidth="2" strokeDasharray="7 3" />
        {fastParts.map(([from, to, rising]) => (
          <path
            key={from}
            d={pathOf(fast, from, to)}
            fill="none"
            stroke={rising ? "#00ff00" : "#ff0000"}
            strokeWidth="3"
          />
        ))}
        <g fill="#e040ff">
          {upperDots.map(([i, y]) => (
            <circle key={i} cx={barX(i) + 0.5} cy={y + 0.5} r="1.8" />
          ))}
        </g>
        <g fill="#00ffff">
          {lowerDots.map(([i, y]) => (
            <circle key={i} cx={barX(i) + 0.5} cy={y + 0.5} r="1.8" />
          ))}
        </g>
        <g fill="#ffff00">
          {swingHighs.map(i => (
            <circle key={i} cx={barX(i)} cy={renko[i].high - (highs[i] ? 12 : 6)} r="2.7" />
          ))}
          {swingLows.map(i => (
            <circle key={i} cx={barX(i)} cy={renko[i].low + 10} r="2.7" />
          ))}
        </g>
        {tags.map(([y, parts, backed]) => (
          <Tag key={y} y={y} parts={parts} backed={backed} />
        ))}
        <rect x="60" y="380" width="12" height="963" fill="rgba(0, 110, 0, 0.3)" />
        <rect x="1620" y="380" width="60" height="963" fill="rgba(144, 16, 16, 0.5)" />

        {depth.map(([y, w, fill]) => (
          <rect key={y} x={2201 - w} y={y - 1} width={w} height="3" fill={fill} />
        ))}
        <path d="M2076 615.5h12M2076 790.5h12" stroke="#ffffff" strokeWidth="3" />
        <text x="2092" y="619" fill="#ffffff">6090.00</text>
        <text x="2092" y="794" fill="#ffffff">6084.00</text>
        <g fill="#0080c0" textAnchor="end">
          <text x="2199" y="614">0.25</text>
          <text x="2199" y="628">305 - 55.2%</text>
          <text x="2199" y="792" fill="#ff8000">248 - 44.8%</text>
        </g>

        <rect x="2282" y="366" width="41" height="978" fill="#001722" stroke="#00508c" />
        <rect x="2352" y="366" width="44" height="978" fill="#3a0000" stroke="#b45000" />
        <g textAnchor="middle" fill="#c0c0c0">
          <text x="2244" y="380">Price</text>
          <text x="2302" y="380" fill="#0070a8">Buy</text>
          <text x="2373" y="380" fill="#d05000">Sell</text>
          {Array.from({ length: 32 }, (_, n) => 6097 - n).map(p => (
            <g key={p}>
              <path d={`M2206 ${Math.round(priceY(p)) + 0.5}h3`} stroke="#c0c0c0" />
              <text x="2245" y={Math.round(priceY(p)) + 4}>
                {p.toFixed(2)}
              </text>
            </g>
          ))}
          {priceBoxes.map(([y, text, fill, line]) => (
            <g key={text}>
              <rect x="2220.5" y={y - 6.5} width="50" height="14" fill={fill} stroke={line || fill} />
              <text x="2245" y={y + 5} fill="#1e1e1e">
                {text}
              </text>
            </g>
          ))}
          {ladder.map(([y, text, ask]) => (
            <text key={y} x="2337" y={y + 4} fill={ask ? "#ff8000" : "#0080c0"}>
              {text}
            </text>
          ))}
        </g>
        <path d="M2220 1342.5h51" stroke="#00ff00" strokeWidth="3" />
        <path d="M2206 662.5H2397" stroke="#00b400" />
        <path d="M2206 1245.5H2397" stroke="#e00000" />
        <path d="M2205.5 366V1344.5H8" fill="none" stroke="#c0c0c0" />
        <TimeLabel x={31} y={1355} text="-10-12" box={44} />
        {mainTimes.map(([i, text, box]) => (
          <g key={i}>
            <path d={`M${barX(i) + 0.5} 1345v3`} stroke="#c0c0c0" />
            <TimeLabel x={barX(i)} y={1355} text={text} box={box} />
          </g>
        ))}
        <Badge x={2353} y={1348} w={43} text="11 L" />
      </g>
    </Plot>
    <Clock>New York 08:21:20</Clock>
  </MainChartBox>
)

/* ---------- trade window ---------- */

const TradePanel = styled.aside`
  display: flex;
  flex: 0 0 155px;
  flex-direction: column;
  padding: 2px 0 0;
  background: #848484;
  font: 12px ${SANS};
`

const Combo = styled.label`
  display: flex;
  width: ${props => props.$w}px;
  height: 23px;
  padding: 1px;
  background: #ffffff;
  ${sunken}

  select {
    flex: 1;
    min-width: 0;
    appearance: none;
    border: 0;
    background: transparent;
    padding-left: 1px;
  }
`

const ComboArrow = styled.span`
  display: flex;
  align-items: center;
  justify-content: center;
  width: 16px;
  background: #f0f0f0;
  pointer-events: none;
  ${raised}
`

const Redacted = styled.svg`
  position: absolute;
  left: 2px;
  top: 2px;
`

const ComboWrap = styled.div`
  position: relative;
  margin-top: 3px;
`

const MatchBar = styled.div`
  height: 19px;
  margin: 1px 0 0 4px;
  padding-left: 1px;
  background: #50d050;
  line-height: 19px;
  white-space: nowrap;
`

const TabRow = styled.div`
  display: flex;
  align-items: flex-end;
  width: 147px;
  height: 23px;
  margin: 4px 0 0 4px;
  padding: 2px 0 0 2px;
  background: #f0f0f0;
`

const PanelTab = styled.button`
  flex: 1 1 ${props => props.$w}px;
  height: ${props => (props.$active ? 21 : 18)}px;
  padding-bottom: ${props => (props.$active ? 4 : 0)}px;
  border: 0;
  border-right: ${props => (props.$last ? 0 : 2)}px solid #696969;
  background: #f0f0f0;
`

const PanelPage = styled.div`
  width: 147px;
  height: 367px;
  margin-left: 4px;
  padding: 5px 3px 0 5px;
  border: 3px solid #f0f0f0;
  border-top: 0;
  border-bottom-width: 4px;
  box-shadow: 1px 1px 0 #696969;
`

const Field = styled.input`
  display: block;
  width: 133px;
  height: 19px;
  margin-bottom: 3px;
  padding-left: 1px;
  background: #ffffff;
  ${sunken}
`

const ButtonGrid = styled.div`
  display: grid;
  grid-template-columns: repeat(${props => props.$cols}, 1fr);
  gap: 4px ${props => props.$gap}px;
  width: 132px;
  margin-top: 4px;
`

const tones = {
  buy: "#00ff00",
  sell: "#ff0000",
  orange: "#ff8000",
  cancel: "#848484",
  menu: "#f0f0f0",
  qty: "#d8d800",
}

const PanelButton = styled.button`
  height: ${props => props.$h}px;
  background: ${props => tones[props.$tone]};
  color: #101010;
  font-weight: ${props => (props.$tone === "qty" ? "normal" : "bold")};
  font-size: ${props => (props.$tone === "qty" ? 12 : 11)}px;
  line-height: 14px;
  ${props => (props.$down ? sunken : raised)}

  mark {
    background: #ff8000;
    color: inherit;
    padding: 1px;
  }
`

const Attach = styled.label`
  display: flex;
  align-items: center;
  gap: 6px;
  margin: 12px 0 8px;
  white-space: nowrap;

  input {
    appearance: none;
    flex: 0 0 12px;
    height: 12px;
    background: #ffffff;
    ${sunken}
  }

  svg {
    position: absolute;
    margin-left: 2px;
  }
`

const BeButton = styled(PanelButton)`
  display: block;
  width: 40px;
  margin-left: 46px;
  font-weight: normal;
`

const Caret = () => (
  <svg width="7" height="4" viewBox="0 0 7 4">
    <path d="M0 0h7L3.500 4z" />
  </svg>
)

const TradeWindow = () => (
  <TradePanel aria-label="Trade window">
    <Combo $w={152}>
      <select aria-label="Trade config" defaultValue="16 Tick NQ">
        <option>16 Tick NQ</option>
      </select>
      <ComboArrow>
        <Caret />
      </ComboArrow>
    </Combo>
    <MatchBar>Qty: 1 Target/Stops Match</MatchBar>
    <TabRow>
      <PanelTab $w={40}>Main</PanelTab>
      <PanelTab $w={52}>Targets</PanelTab>
      <PanelTab $w={28} $last>Set</PanelTab>
      <PanelTab $w={23} $active>C</PanelTab>
    </TabRow>
    <PanelPage>
      <Field aria-label="Position" defaultValue="Flat" />
      <Field aria-label="Profit and loss" defaultValue="P/L: 0.00C" />
      <Field aria-label="Daily" defaultValue="D:0.00C" />
      <ComboWrap>
        <Combo $w={117}>
          <select aria-label="Account">
            <option />
          </select>
          <ComboArrow>
            <Caret />
          </ComboArrow>
        </Combo>
        <Redacted width="54" height="19" viewBox="0 0 54 19">
          <path
            d="M0 5L8 1 16 3 26 2 38 3 45 6 53 5 50 9 54 13 47 14 44 18 32 17 22 15 12 18 8 15 0 16z"
            fill="#000000"
            stroke="#000000"
          />
        </Redacted>
      </ComboWrap>
      <ButtonGrid $cols={3} $gap={7}>
        {["MKT", "ASK", "BID"].map(t => (
          <PanelButton key={t} $tone="buy" $h={38}>
            BUY
            <br />
            {t}
          </PanelButton>
        ))}
        {["MKT", "ASK", "BID"].map(t => (
          <PanelButton key={t} $tone="sell" $h={38}>
            SELL
            <br />
            {t}
          </PanelButton>
        ))}
      </ButtonGrid>
      <ButtonGrid $cols={2} $gap={3}>
        <PanelButton $tone="orange" $h={30}>
          <u>F</u>latten
        </PanelButton>
        <PanelButton $tone="orange" $h={30}>
          <u>R</u>everse
        </PanelButton>
        <PanelButton $tone="cancel" $h={30}>
          <mark>
            Cancel <u>A</u>ll
          </mark>
        </PanelButton>
        <PanelButton $tone="menu" $h={30}>
          Menu
        </PanelButton>
      </ButtonGrid>
      <ButtonGrid $cols={3} $gap={6}>
        {[1, 2, 4, 5, 8, 0].map(n => (
          <PanelButton key={n} $tone="qty" $h={24} $down={n === 1}>
            {n}
          </PanelButton>
        ))}
      </ButtonGrid>
      <Attach>
        <input type="checkbox" defaultChecked />
        <svg width="8" height="8" viewBox="0 0 8 8" fill="none" stroke="#000000" strokeWidth="2">
          <path d="M0 4l3 2 4-5" />
        </svg>
        Use Attached Orders
      </Attach>
      <BeButton $tone="menu" $h={23}>BE</BeButton>
    </PanelPage>
  </TradePanel>
)

/* ---------- toolbar ---------- */

const box = (x, y) => <rect x={x - 1.5} y={y - 1.5} width="3" height="3" fill="#f0f0f0" />

const icons = {
  spread: <path d="M4.5 5.500h3M7.500 5v18M4.500 22.500h3M21.500 5.500h3M21.500 5v18M21.500 22.500h3M9 13.500h11M12 10.500l-3 3 3 3M17 10.500l3 3-3 3" />,
  narrow: <path d="M12.500 5v18M17.500 5v18M4 13.500h7M8 10.500l3 3-3 3M26 13.500h-7M22 10.500l-3 3 3 3" />,
  zoomIn: (
    <>
      <circle cx="13" cy="11" r="6.500" fill="#ffffff" />
      <path d="M17 16l6 8" strokeWidth="3" />
      <path d="M13 8v6M10 11h6" stroke="#00a000" />
    </>
  ),
  zoomOff: (
    <g stroke="#a0a0a0" fill="#a0a0a0">
      <circle cx="13" cy="11" r="6.500" />
      <path d="M17 16l5 7" strokeWidth="4" />
    </g>
  ),
  cursor: <path d="M11.500 5.500v15l3-3 3 6 2-1-3-6h4z" fill="#ffffff" />,
  hand: (
    <>
      <path d="M9 20c-2-4-5-6-5-8 1-1 2 0 4 2L6 7c1-2 2-1 3 4V5c1-2 2-1 3 0v5l1-6c1-1 3 0 2 1v6l2-4c2 0 1 2 1 3l-1 6-1 4z" fill="#ffffff" />
      <path d="M7 21h10v3H7z" fill="#000000" />
      <path d="M26.500 13v11M21 18.500h11M25 14.500l1.500-2 1.500 2M25 22.500l1.500 2 1.500-2M22.500 17l-2 1.500 2 1.500M30.500 17l2 1.500-2 1.500" />
    </>
  ),
  cross: <path d="M3 14.500h24M14.500 4v20M11.500 11.500h6v6h-6z" />,
  level: <path d="M3 12.500h24M14.500 4v6M12 8l2.500 2.500L17 8M14.500 21v-6M12 17l2.500-2.500L17 17" />,
  arrow: <path d="M6 23L22 6M15 6.500h7v7" />,
  segment: <>
    <path d="M7 22L21 8" />
    {box(6.5, 22.5)}
    {box(21.5, 7.5)}
  </>,
  horizontal: <path d="M3 14.500h24" />,
  vertical: <path d="M14.500 3v23" />,
  ray: <>
    <path d="M4 25L25 4" />
    {box(11.5, 17.5)}
    {box(17.5, 11.5)}
  </>,
  ellipse: <ellipse cx="14.500" cy="14.500" rx="10.500" ry="7.500" />,
  rect: <path d="M4.500 7.500h20v15h-20z" />,
  filled: <path d="M10 10h9v9h-9z" fill="#000000" />,
  polyline: <>
    <path d="M7 21L22 6" />
    {box(7, 21.5)}
    {box(15.5, 13.5)}
  </>,
  retrace: (
    <>
      <path d="M4 23L15.500 5.500V23" />
      <path d="M16 5.500h11" stroke="#009000" />
      <path d="M16 11.500h11" stroke="#0060e0" />
      <path d="M16 17.500h11" stroke="#ff4000" />
      <path d="M16 23.500h11" stroke="#a000c0" />
      {box(4, 23)}
      {box(15.5, 5.5)}
    </>
  ),
  project: (
    <>
      <path d="M4 23l7-10 5 6V5.500" />
      <path d="M17 5.500h10" stroke="#009000" />
      <path d="M17 12.500h10" stroke="#ff4000" />
      <path d="M17 19.500h10" stroke="#a000c0" />
      {box(4, 23)}
      {box(11, 13)}
      {box(16, 19)}
    </>
  ),
  calc: (
    <>
      <path d="M5 22L19 8" strokeWidth="2" />
      {box(5, 22)}
      {box(19, 8)}
      <path d="M18.500 13.500h8v11h-8z" fill="#ffffff" />
      <path d="M20 16h5M20 19h5M20 22h5" strokeDasharray="1 1" />
    </>
  ),
}

const dither = (a, b) => `repeating-conic-gradient(${a} 0 25%, ${b} 0 50%) 0 0 / 2px 2px`

const TvwIcon = () => (
  <svg width="30" height="29" viewBox="0 0 30 29" stroke="#000000" fill="none">
    <text x="2" y="9" fontSize="8" stroke="none" fill="#000000">TVW</text>
    <path d="M3 10h13v14H3z" fill="#000000" />
    <path d="M3 13.500h13M3 16.500h13M3 19.500h13M3 22.500h13M6.500 11v13M9.500 11v13M12.500 11v13" stroke="#a0a0a0" />
    <path d="M16 17.500h11M21.500 12v11" />
  </svg>
)

const tools = [
  { label: "FS", w: 24 },
  { label: "Sv", w: 23 },
  { label: "OC", w: 26 },
  { label: "DupC", w: 38 },
  { label: "VolProf", w: 46, bg: "#00ffff" },
  { label: "CC", w: 26 },
  { label: "SIM", w: 29, gap: 4, bg: "#ff0000", color: "#600000" },
  { label: "LOCK", w: 39, bg: dither("#80d080", "#d0f0d0"), color: "#103010", down: true },
  { icon: "spread", gap: 4 },
  { icon: "narrow" },
  { icon: "zoomIn" },
  { icon: "zoomOff" },
  { icon: "cursor", gap: 4 },
  { icon: "hand", w: 36 },
  { icon: "cross" },
  { icon: "level" },
  { icon: "arrow" },
  { icon: "segment" },
  { icon: "horizontal" },
  { icon: "vertical" },
  { icon: "ray" },
  { icon: "ellipse" },
  { icon: "rect" },
  { icon: "filled" },
  { icon: "polyline" },
  { label: "abc", plain: true },
  { icon: "retrace", bg: "#ffff80" },
  { icon: "project", bg: "#80ff80" },
  { icon: "calc", bg: dither("#ff8000", "#f8d0a8"), down: true },
  { label: "DVP", w: 31, color: "#a0a0a0" },
  { label: "TC 1", w: 32, bg: "#f8f8f8", down: true },
  { label: "TC 2", w: 33 },
  { label: "Rpl", w: 28, gap: 3 },
  { label: "CVW", w: 34 },
  { icon: "tvw" },
  { label: "CTV" },
  { label: "Log", gap: 4 },
  { label: "TOP" },
  { label: "Dly", w: 27, gap: 4 },
  { label: "We", w: 26 },
  { label: "1M", w: 25 },
  { label: "5M", w: 25 },
  { label: "10M" },
  { label: "15M" },
  { label: "30M" },
  { label: "1H", w: 25 },
]

const ToolIcon = ({ name, w = 30 }) =>
  name === "tvw" ? (
    <TvwIcon />
  ) : (
    <svg width={w} height="29" viewBox={`0 0 ${w} 29`} stroke="#000000" fill="none">
      {icons[name]}
    </svg>
  )

const WinControls = ({ restore }) => (
  <>
    <WindowButton aria-label="Minimize">
      <svg width="11" height="11" stroke="currentColor"><path d="M0 5.500h10" /></svg>
    </WindowButton>
    <WindowButton aria-label="Maximize">
      <svg width="11" height="11" stroke="currentColor" fill="none">
        {restore ? <path d="M.500 2.500h7v8h-7zM2.500 2.500v-2h7v8h-2" /> : <path d="M.500.500h9v9h-9z" />}
      </svg>
    </WindowButton>
    <WindowButton aria-label="Close">
      <svg width="11" height="11" stroke="currentColor"><path d="M0 0l10 10M10 0L0 10" /></svg>
    </WindowButton>
  </>
)

/* ---------- chartbook tabs ---------- */

const BottomTabs = styled.nav`
  display: flex;
  flex: 0 0 23px;
  gap: 2px;
  padding: 1px 0 0 4px;
  border-top: 1px solid #808080;
  background: #f0f0f0;
`

const BottomTab = styled.button`
  width: ${props => props.$w}px;
  height: 19px;
  border: 0;
  border-right: 1px solid #606060;
  border-bottom: 1px solid #606060;
  background: ${props => props.$bg};
  color: #101010;
  font-size: 11px;
  line-height: 18px;
  white-space: pre;
`

const books = [
  ["NQ Trend", 64, "#ffc400"],
  ["NQ Scalp", 58, "#ffc400"],
  ["GC Trend", 60, "#ffff80"],
  ["CL Trend", 59, "#808080"],
  ["RTY Trend", 65, "#e88000"],
  ["RTY Scalp", 62, "#e88000"],
  ["ES Trend", 55, "#ee10ff"],
  ["YM Trend", 62, "#f0f0f0"],
  ["Euro Trend", 67, "#f0f0f0"],
  ["Yen Trend", 65, "#f0f0f0"],
  ["F.US.ENQZ17  60 Min   #11  L:1", 170, "#ffc400"],
  ["F.US.ENQZ17  5 Min   #6  L:1", 158, "#ffc400"],
  ["F.US.EPZ17  60 Min   #5  L:5", 153, "#ee10ff"],
  ["F.US.EPZ17  5 Min   #16  L:5", 153, "#ee10ff"],
  ["NQ Reset", 59, "#ffc400"],
]

const menus = ["File", "Edit", "Chart", "Analysis", "Tools", "Spreadsheet", "Trade", "Global Settings", "Window", "CB", "CW", "Help"]

const App = () => (
  <Shell>
    <GlobalStyle />
    <TitleBar>
      <svg width="16" height="16" viewBox="0 0 16 16">
        <circle cx="8" cy="8" r="7.500" fill="#0018d8" stroke="#000000" />
        <path d="M2 4l4-3 3 1-1 3 2 1-3 3H4L1 7zM9 8l4-1 2 2-3 5-2-1zM11 2l3 3-2 1z" fill="#30e040" />
      </svg>
      <TitleText>
        Sierra Chart 1621 RenkoNQSetup.cht  CQG FIX Trading 2017-10-13  08:21:19 Fri  DF:8199  ST:8, 0
      </TitleText>
      <WindowButtons>
        <WinControls restore />
      </WindowButtons>
    </TitleBar>
    <MenuBar>
      {menus.map(name => (
        <MenuLink key={name} href={`#${name}`}>
          {name}
        </MenuLink>
      ))}
    </MenuBar>
    <Toolbar>
      <FeedStatus>DF:8230  ST:8, 0</FeedStatus>
      {tools.map(t => (
        <ToolButton
          key={t.label || t.icon}
          aria-label={t.label || t.icon}
          $w={t.w}
          $gap={t.gap}
          $bg={t.bg}
          $color={t.color}
          $down={t.down}
          $plain={t.plain}
        >
          {t.icon ? <ToolIcon name={t.icon} w={t.w} /> : t.label}
        </ToolButton>
      ))}
    </Toolbar>
    <TabStrip>
      <BookTab>RenkoNQSetup</BookTab>
    </TabStrip>
    <TopRow>
      {miniCharts.map(chart => (
        <MiniChart key={chart.name} chart={chart} />
      ))}
      <Futures />
    </TopRow>
    <MainArea>
      <MainFrame>
        <MainChart />
        <TradeWindow />
      </MainFrame>
    </MainArea>
    <BottomTabs>
      {books.map(([name, w, bg]) => (
        <BottomTab key={name} $w={w} $bg={bg}>
          {name}
        </BottomTab>
      ))}
    </BottomTabs>
  </Shell>
)

export default App
